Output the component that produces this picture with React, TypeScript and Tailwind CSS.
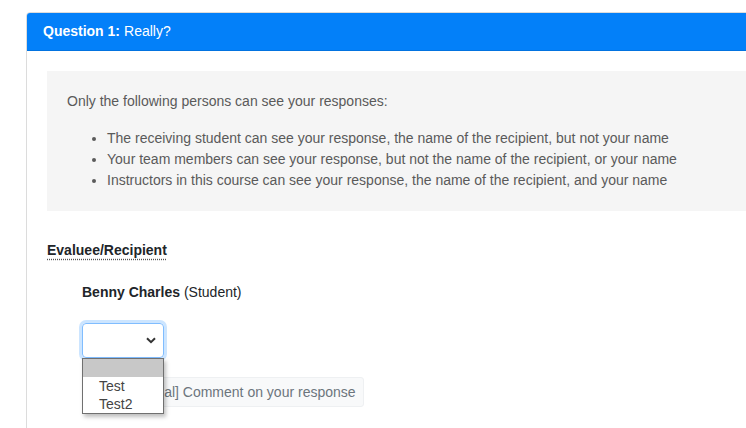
const visibility = [
    'The receiving student can see your response, the name of the recipient, but not your name',
    'Your team members can see your response, but not the name of the recipient, or your name',
    'Instructors in this course can see your response, the name of the recipient, and your name',
]

const App = () => {
    return (
        <div className="w-[746px] h-[428px] overflow-hidden bg-white pt-3 pl-[26px] text-[14px] leading-[21px] text-[#212529]" style={{ fontFamily: 'Arial, "Liberation Sans", sans-serif' }}>
            <div className="w-[760px] h-[460px] border border-[#dcdcdc] rounded-t-[4px]">
                <div className="h-[38px] bg-[#0380f9] border-b border-[#0273e0] px-4 flex items-center text-white rounded-t-[3px]">
                    <span className="font-bold">Question 1:</span>
                    <span className="ml-1">Really?</span>
                </div>

                <div className="px-5 pt-5">
                    <div className="bg-[#f5f5f5] p-5 text-[#5a5a5a]">
                        <p className="mb-4">Only the following persons can see your responses:</p>
                        <ul className="list-disc pl-10">
                            {visibility.map((item) => (
                                <li key={item}>{item}</li>
                            ))}
                        </ul>
                    </div>

                    <div className="mt-[29px]">
                        <span className="font-bold underline decoration-dotted decoration-[#555] underline-offset-[4px]">Evaluee/Recipient</span>
                    </div>

                    <div className="pl-[35px] mt-[21px]">
                        <p>
                            <span className="font-bold">Benny Charles</span> (Student)
                        </p>

                        <div className="relative mt-5">
                            <div className="w-[82px] h-[35px] border border-[#80bdff] rounded-[4px] shadow-[0_0_0_3px_rgba(0,123,255,0.2)] flex items-center justify-end pr-[7px]">
                                <svg width="10" height="7" viewBox="0 0 10 7">
                                    <path d="M1 1.2 L5 5.2 L9 1.2" fill="none" stroke="#333" strokeWidth="2" />
                                </svg>
                            </div>

                            <div className="mt-[19px] ml-[28px] w-[254px] h-[30px] bg-[#f8f9fa] border border-[#eef0f2] rounded-[3px] flex items-center pl-2 text-[#6c757d]">
                                [Optional] Comment on your response
                            </div>

                            <div className="absolute left-0 top-[35px] w-[82px] border border-[#707070] bg-white shadow-[2px_3px_4px_rgba(0,0,0,0.25)] text-[#444] leading-[18px]">
                                <div className="h-[18px] bg-[#c8c8c8]"></div>
                                <div className="h-[18px] pl-[16px]">Test</div>
                                <div className="h-[18px] pl-[16px]">Test2</div>
                            </div>
                        </div>
                    </div>
                </div>
            </div>
        </div>
    )
}

export default App
